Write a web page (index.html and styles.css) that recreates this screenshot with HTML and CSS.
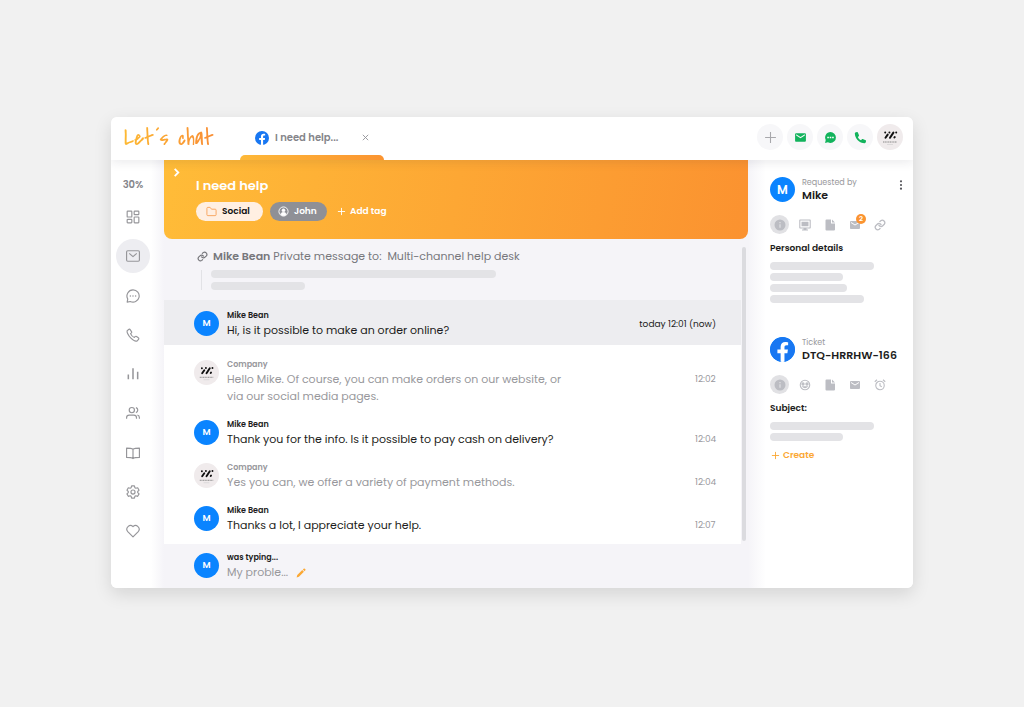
FILE: index.html
```html
<!DOCTYPE html>
<html lang="en">
<head>
  <meta charset="UTF-8">
  <meta name="viewport" content="width=device-width, initial-scale=1.0">
  <title>Let´s chat</title>
  <link rel="stylesheet" href="styles.css">
</head>
<body>

  <!-- shared icons -->
  <svg class="sprite" aria-hidden="true">
    <symbol id="facebook" viewBox="0 0 24 24">
      <circle cx="12" cy="12" r="12" fill="#1877f2"/>
      <path fill="#fff" d="M16.700 15.500l.5-3.500h-3.300V9.800c0-1 .5-1.900 2-1.900h1.500V5s-1.400-.3-2.700-.3c-2.700 0-4.500 1.700-4.500 4.700V12H7.100v3.500h3.100v8.400a12 12 0 0 0 3.700 0v-8.400z"/>
    </symbol>
    <symbol id="company" viewBox="0 0 26 26">
      <g stroke="#111" stroke-width="2" stroke-linecap="round">
        <path d="M8.500 13.800l2.200-3.200M13 13.800l3.400-5.200M17.400 13.500l.3-.4"/>
        <path d="M8.200 8.600h.01M12.400 8.400h.01M19.200 8.400h.01"/>
      </g>
      <path stroke="#888" stroke-width="1" stroke-dasharray="1.200 .5" d="M6 18h14"/>
      <path stroke="#ccc" stroke-width=".6" d="M10 20.500h6"/>
    </symbol>
    <symbol id="mail" viewBox="0 0 24 24">
      <path fill="currentColor" d="M20 4H4a2 2 0 0 0-2 2v12c0 1.100.9 2 2 2h16a2 2 0 0 0 2-2V6a2 2 0 0 0-2-2zm0 4.200l-8 5-8-5V6l8 5 8-5z"/>
    </symbol>
    <symbol id="info" viewBox="0 0 24 24">
      <path fill="currentColor" fill-rule="evenodd" d="M12 1a11 11 0 1 0 0 22 11 11 0 0 0 0-22zm1.200 16.500h-2.400v-7h2.400zm0-9h-2.400V6.200h2.400z"/>
    </symbol>
    <symbol id="file" viewBox="0 0 24 24">
      <path fill="currentColor" d="M5 1h9v8h8v12a2 2 0 0 1-2 2H5a2 2 0 0 1-2-2V3a2 2 0 0 1 2-2zm11 0l6 6h-6z"/>
    </symbol>
    <symbol id="link" viewBox="0 0 24 24">
      <path fill="none" stroke="currentColor" stroke-width="2.600" stroke-linecap="round" stroke-linejoin="round" d="M10 13a5 5 0 0 0 7.500.5l3-3a5 5 0 0 0-7-7l-1.800 1.700M14 11a5 5 0 0 0-7.500-.5l-3 3a5 5 0 0 0 7 7l1.700-1.700"/>
    </symbol>
  </svg>

  <div class="app">

    <header class="topbar">
      <a class="logo" href="#">Let´s chat</a>
      <div class="tab">
        <svg class="tab-icon"><use href="#facebook"/></svg>
        <span class="tab-name">I need help...</span>
        <button class="tab-close" aria-label="Close tab">
          <svg viewBox="0 0 10 10"><path d="M2 2l6 6M8 2l-6 6"/></svg>
        </button>
      </div>
      <div class="actions">
        <button class="action add" aria-label="New">
          <svg viewBox="0 0 24 24"><path fill="none" stroke="currentColor" stroke-width="2" d="M12 2v20M2 12h20"/></svg>
        </button>
        <button class="action" aria-label="Mail"><svg><use href="#mail"/></svg></button>
        <button class="action" aria-label="Chat">
          <svg viewBox="0 0 24 24">
            <path fill="currentColor" d="M12 2a10 10 0 0 1 0 20c-1.700 0-3.300-.4-4.700-1.200L2 22l1.200-5.300A10 10 0 0 1 12 2z"/>
            <path fill="#fff" d="M6 10.500h3v3H6zM10.500 10.500h3v3h-3zM15 10.500h3v3h-3z"/>
          </svg>
        </button>
        <button class="action" aria-label="Call">
          <svg viewBox="0 0 24 24"><path fill="currentColor" d="M7 2.500L9.200 8c.2.600 0 1.200-.4 1.600L7 11c1.200 2.700 3.300 4.800 6 6l1.500-1.800c.4-.5 1-.6 1.600-.4l5.400 2.300c.6.300 1 1 .8 1.600l-.9 2.700c-.2.600-.8 1.100-1.500 1.100C10 22.500 1.500 14 1.500 4.100c0-.7.500-1.300 1.100-1.500l2.800-.9c.7-.2 1.300.2 1.600.8z"/></svg>
        </button>
        <button class="action company" aria-label="Company account"><svg><use href="#company"/></svg></button>
      </div>
    </header>

    <div class="content">

      <aside class="sidebar">
        <span class="percent">30%</span>
        <nav>
          <a href="#" aria-label="Dashboard"><svg viewBox="0 0 24 24"><rect x="2" y="2" width="8" height="10" rx="1"/><rect x="14" y="2" width="8" height="6" rx="1"/><rect x="14" y="12" width="8" height="10" rx="1"/><rect x="2" y="16" width="8" height="6" rx="1"/></svg></a>
          <a href="#" class="active" aria-label="Tickets"><svg viewBox="0 0 24 24"><rect x="1" y="3" width="22" height="18" rx="2"/><path d="M5.500 7.500l6.500 5.500 6.500-5.500"/></svg></a>
          <a href="#" aria-label="Chats"><svg viewBox="0 0 24 24"><path d="M12 1.500a10.500 10.500 0 1 1-4.600 19.900L2 22.500l1-5.300A10.500 10.500 0 0 1 12 1.500z"/><path stroke-width="2.600" stroke-linecap="round" d="M7.500 12h.01M12 12h.01M16.500 12h.01"/></svg></a>
          <a href="#" aria-label="Calls"><svg viewBox="0 0 24 24"><path d="M2.200 4.500l2.300-2c.8-.7 2-.6 2.600.3l2.300 3.300c.5.700.4 1.700-.2 2.300L7.800 9.700c1 2.600 3.900 5.500 6.500 6.500l1.400-1.500c.6-.6 1.600-.7 2.300-.2l3.200 2.300c.9.600 1 1.800.3 2.600l-2 2.300c-2 1.500-7.200-.4-11.500-4.700S.9 6.500 2.200 4.500z"/></svg></a>
          <a href="#" aria-label="Reports"><svg viewBox="0 0 24 24"><path stroke-width="2.600" d="M4 21v-8M12 21V2M20 21V8"/></svg></a>
          <a href="#" aria-label="Customers"><svg viewBox="0 0 24 24"><circle cx="10" cy="7" r="4.500"/><path d="M1 22v-2c0-3 2-4.500 4.500-4.500h8c2.500 0 4.500 1.500 4.500 4.500v2M17 2.700a4.500 4.500 0 0 1 0 8.600M23 22v-2c0-2.500-1-4-3.500-4.500"/></svg></a>
          <a href="#" aria-label="Knowledge base"><svg viewBox="0 0 24 24"><path d="M12 5.500c-2-1.500-6-2-11-2v16c5 0 9 .5 11 2 2-1.500 6-2 11-2v-16c-5 0-9 .5-11 2zM12 5.500v16"/></svg></a>
          <a href="#" aria-label="Settings"><svg viewBox="0 0 24 24"><circle cx="12" cy="12" r="3.500"/><path d="M9.600 1.500h4.800l.8 3.100 1.700 1 3.100-.9 2.400 4.200-2.300 2.200v1.900l2.300 2.200-2.400 4.200-3.100-.9-1.700 1-.8 3.100H9.600l-.8-3.100-1.700-1-3.100.9-2.400-4.200L3.900 13v-1.900L1.600 8.900 4 4.700l3.100.9 1.700-1z"/></svg></a>
          <a href="#" aria-label="Favourites"><svg viewBox="0 0 24 24"><path d="M12 22l-9-9A6.200 6.200 0 0 1 12 4.500 6.200 6.200 0 0 1 21 13z"/></svg></a>
        </nav>
      </aside>

      <main class="ticket">
        <div class="ticket-header">
          <svg class="chevron" viewBox="0 0 10 10"><path d="M3 1l4 4-4 4"/></svg>
          <h1>I need help</h1>
          <div class="tags">
            <span class="tag social">
              <svg viewBox="0 0 24 24"><path d="M2 5a2 2 0 0 1 2-2h5l3 4h8a2 2 0 0 1 2 2v10a2 2 0 0 1-2 2H4a2 2 0 0 1-2-2z"/></svg>
              Social
            </span>
            <span class="tag person">
              <svg viewBox="0 0 24 24"><circle cx="12" cy="12" r="10"/><circle cx="12" cy="9.500" r="3" fill="#fff"/><path fill="#fff" d="M6 18c1-5 11-5 12 0-3 3.500-9 3.500-12 0z"/></svg>
              John
            </span>
            <button class="add-tag">
              <svg viewBox="0 0 10 10"><path d="M5 1v8M1 5h8"/></svg>
              Add tag
            </button>
          </div>
        </div>

        <div class="thread">
          <div class="messages">
            <div class="private">
              <div class="private-title">
                <svg><use href="#link"/></svg>
                <p><b>Mike Bean</b> Private message to: &nbsp;Multi-channel help desk</p>
              </div>
              <div class="quote">
                <div class="bar bar-xl"></div>
                <div class="bar bar-md"></div>
              </div>
            </div>

            <div class="message current">
              <span class="avatar">M</span>
              <div class="text">
                <h2>Mike Bean</h2>
                <p>Hi, is it possible to make an order online?</p>
              </div>
              <time>today 12:01 (now)</time>
            </div>

            <div class="history">
              <div class="message reply">
                <svg class="avatar company"><use href="#company"/></svg>
                <div class="text">
                  <h2>Company</h2>
                  <p>Hello Mike. Of course, you can make orders on our website, or<br>via our social media pages.</p>
                </div>
                <time>12:02</time>
              </div>
              <div class="message">
                <span class="avatar">M</span>
                <div class="text">
                  <h2>Mike Bean</h2>
                  <p>Thank you for the info. Is it possible to pay cash on delivery?</p>
                </div>
                <time>12:04</time>
              </div>
              <div class="message reply">
                <svg class="avatar company"><use href="#company"/></svg>
                <div class="text">
                  <h2>Company</h2>
                  <p>Yes you can, we offer a variety of payment methods.</p>
                </div>
                <time>12:04</time>
              </div>
              <div class="message">
                <span class="avatar">M</span>
                <div class="text">
                  <h2>Mike Bean</h2>
                  <p>Thanks a lot, I appreciate your help.</p>
                </div>
                <time>12:07</time>
              </div>
            </div>
          </div>
          <div class="scrollbar"></div>
        </div>

        <div class="message typing">
          <span class="avatar">M</span>
          <div class="text">
            <h2>was typing...</h2>
            <p>My proble...
              <svg class="pencil" viewBox="0 0 24 24"><path fill="#fba834" d="M1.500 22.500L3 17 15 5l4 4L7 21zM16.500 3.500L18.500 1.500c.7-.7 1.700-.7 2.400 0l1.600 1.600c.7.700.7 1.700 0 2.400l-2 2z"/></svg>
            </p>
          </div>
        </div>
      </main>

      <aside class="details">
        <section>
          <div class="details-head">
            <span class="avatar">M</span>
            <div>
              <small>Requested by</small>
              <h3>Mike</h3>
            </div>
            <button class="more" aria-label="More">
              <svg viewBox="0 0 4 10"><circle cx="2" cy="1.300" r="1.100"/><circle cx="2" cy="5" r="1.100"/><circle cx="2" cy="8.700" r="1.100"/></svg>
            </button>
          </div>
          <div class="details-tabs">
            <button class="selected" aria-label="Info"><svg><use href="#info"/></svg></button>
            <button aria-label="Device"><svg viewBox="0 0 24 24"><path fill="currentColor" fill-rule="evenodd" d="M2 1h20a1.500 1.500 0 0 1 1.500 1.500v15A1.500 1.500 0 0 1 22 19h-7v2h3v2H6v-2h3v-2H2a1.500 1.500 0 0 1-1.500-1.500v-15A1.500 1.500 0 0 1 2 1zm.7 2.200v13.600h18.600V3.200zM5 5.500h14v9H5z"/></svg></button>
            <button aria-label="Files"><svg><use href="#file"/></svg></button>
            <button aria-label="Mails"><svg><use href="#mail"/></svg><span class="badge">2</span></button>
            <button aria-label="Links"><svg><use href="#link"/></svg></button>
          </div>
          <h4>Personal details</h4>
          <div class="bars">
            <div class="bar bar-lg"></div>
            <div class="bar bar-xs"></div>
            <div class="bar bar-sm"></div>
            <div class="bar bar-md"></div>
          </div>
        </section>

        <section>
          <div class="details-head">
            <svg class="avatar"><use href="#facebook"/></svg>
            <div>
              <small>Ticket</small>
              <h3>DTQ-HRRHW-166</h3>
            </div>
          </div>
          <div class="details-tabs">
            <button class="selected" aria-label="Info"><svg><use href="#info"/></svg></button>
            <button aria-label="Mood"><svg viewBox="0 0 24 24" fill="none" stroke="currentColor" stroke-width="2.200"><circle cx="12" cy="12" r="9.500"/><circle cx="8" cy="10" r="2.200" fill="currentColor"/><circle cx="16" cy="10" r="2.200" fill="currentColor"/><path d="M7.500 15.500c2 2.500 7 2.500 9 0z"/></svg></button>
            <button aria-label="Files"><svg><use href="#file"/></svg></button>
            <button aria-label="Mails"><svg><use href="#mail"/></svg></button>
            <button aria-label="Reminder"><svg viewBox="0 0 24 24" fill="none" stroke="currentColor" stroke-width="2.200"><circle cx="12" cy="13" r="8.500"/><path d="M12 8v5.500l3.500 2M1.500 5.500l4.500-4M22.500 5.500l-4.500-4"/></svg></button>
          </div>
          <h4>Subject:</h4>
          <div class="bars">
            <div class="bar bar-lg"></div>
            <div class="bar bar-xs"></div>
          </div>
          <button class="create">
            <svg viewBox="0 0 10 10"><path d="M5 1v8M1 5h8"/></svg>
            Create
          </button>
        </section>
      </aside>

    </div>
  </div>

</body>
</html>
```

FILE: styles.css
```css
* {
  box-sizing: border-box;
}

body {
  margin: 0;
  padding-bottom: 2px;
  min-height: 100vh;
  display: grid;
  place-items: center;
  background: #f1f1f1;
  color: #1c1c20;
  font-family: Poppins, Inter, sans-serif;
  font-size: 11px;
}

h1, h2, h3, h4, p {
  margin: 0;
}

button {
  padding: 0;
  border: none;
  background: none;
  font: inherit;
  cursor: pointer;
}

svg {
  display: block;
  flex-shrink: 0;
}

.sprite {
  position: absolute;
  width: 0;
  height: 0;
}

.app {
  width: 100%;
  max-width: 802px;
  background: #fff;
  border-radius: 6px;
  box-shadow: 0 6px 18px rgba(0, 0, 0, 0.12);
  overflow: hidden;
}

/* Top bar */

.topbar {
  position: relative;
  z-index: 1;
  display: flex;
  align-items: stretch;
  height: 43px;
  padding: 0 10px 0 13px;
  background: #fff;
  box-shadow: 0 2px 10px rgba(40, 40, 60, 0.1);
}

.logo {
  width: 116px;
  background: linear-gradient(90deg, #fdb933, #f98f35 88px);
  background-clip: text;
  color: transparent;
  font-family: "Covered By Your Grace", "Reenie Beanie", "Liberation Sans", cursive;
  font-size: 23px;
  line-height: 43px;
  text-decoration: none;
  white-space: nowrap;
}

.tab {
  display: flex;
  align-items: center;
  width: 144px;
  padding: 0 14px 2px 15px;
}

.tab::after {
  content: "";
  position: absolute;
  bottom: 0;
  width: 144px;
  height: 5px;
  margin-left: -15px;
  border-radius: 6px 6px 0 0;
  background: linear-gradient(90deg, #feb938, #fb9431);
}

.tab-icon {
  width: 14px;
  height: 14px;
}

.tab-name {
  margin-left: 6px;
  color: #85858a;
  font-size: 10px;
  font-weight: 600;
}

.tab-close {
  margin-left: auto;
}

.tab-close svg {
  width: 9px;
  height: 9px;
  stroke: #929297;
}

.actions {
  display: flex;
  gap: 4px;
  margin-left: auto;
  padding-top: 7px;
}

.action {
  display: grid;
  place-items: center;
  width: 26px;
  height: 26px;
  border-radius: 50%;
  background: #f7f7f9;
  color: #12b35c;
}

.action svg {
  width: 13px;
  height: 13px;
}

.action.add {
  color: #a8a8ac;
}

.action.company {
  background: #f0ebec;
}

.action.company svg {
  width: 26px;
  height: 26px;
}

/* Sidebar */

.content {
  display: grid;
  grid-template-columns: 53px 1fr 165px;
}

.sidebar {
  display: flex;
  flex-direction: column;
  padding: 17px 9px 40px 0;
  background: linear-gradient(90deg, #fff 40px, #f5f4f8);
}

.percent {
  margin-bottom: 7px;
  color: #85858a;
  font-size: 10px;
  font-weight: 600;
  line-height: 16px;
  text-align: center;
}

.sidebar nav {
  flex: 1;
  display: flex;
  flex-direction: column;
  justify-content: space-between;
  align-items: center;
}

.sidebar a {
  display: grid;
  place-items: center;
  width: 34px;
  height: 34px;
  border-radius: 50%;
}

.sidebar a.active {
  background: #ededf1;
}

.sidebar a svg {
  width: 14px;
  height: 14px;
  fill: none;
  stroke: #96969a;
  stroke-width: 2;
  stroke-linejoin: round;
}

/* Ticket */

.ticket {
  background: #f5f4f8;
}

.ticket-header {
  position: relative;
  height: 79px;
  padding: 16px 32px;
  border-radius: 0 0 8px 8px;
  background: linear-gradient(100deg, #ffbc38, #fb9230);
  color: #fff;
}

.chevron {
  position: absolute;
  top: 8px;
  left: 8px;
  width: 9px;
  height: 9px;
  fill: none;
  stroke: #fff;
  stroke-width: 2;
}

.ticket-header h1 {
  font-size: 13px;
  font-weight: 600;
  line-height: 20px;
}

.tags {
  display: flex;
  align-items: center;
  gap: 7px;
  margin-top: 6px;
}

.tag {
  display: flex;
  align-items: center;
  gap: 5px;
  height: 19px;
  padding: 0 10px;
  border-radius: 10px;
  font-size: 9px;
  font-weight: 600;
}

.tag svg {
  width: 11px;
  height: 11px;
  fill: none;
  stroke: #f7a25a;
  stroke-width: 2;
}

.tag.social {
  width: 67px;
  background: #ffefe2;
  color: #111;
}

.tag.person {
  width: 57px;
  padding: 0 8px;
  background: #8f9096;
}

.tag.person svg {
  stroke: #fff;
}

.add-tag {
  display: flex;
  align-items: center;
  gap: 4px;
  margin-left: 3px;
  color: #fff;
  font-size: 9px;
  font-weight: 600;
}

.add-tag svg,
.create svg {
  width: 9px;
  height: 9px;
  stroke: currentColor;
}

.thread {
  display: flex;
}

.messages {
  flex: 1;
}

.scrollbar {
  width: 4px;
  margin: 8px 2px 3px 1px;
  border-radius: 2px;
  background: #dbdbdf;
}

.private {
  height: 61px;
  padding: 9px 33px 0;
}

.private-title {
  display: flex;
  align-items: center;
  gap: 5px;
  color: #77777c;
  line-height: 17px;
}

.private-title b {
  font-weight: 600;
}

.private-title svg {
  width: 11px;
  height: 11px;
}

.quote {
  display: grid;
  gap: 4px;
  margin: 5px 4px 0;
  padding-left: 9px;
  border-left: 1px solid #e2e2e6;
}

.bar {
  height: 8px;
  border-radius: 4px;
  background: #e3e3e6;
}

.bar-xl { width: 285px; }
.bar-lg { width: 104px; }
.bar-md { width: 94px; }
.bar-sm { width: 77px; }
.bar-xs { width: 73px; }

.message {
  display: flex;
  gap: 8px;
  padding: 0 25px 0 30px;
}

.message.current {
  padding-top: 10px;
  padding-bottom: 6px;
  background: #ededf0;
}

.message.typing {
  padding-top: 8px;
  padding-bottom: 7px;
}

.history {
  display: grid;
  gap: 14px;
  padding: 14px 0 10px;
  background: #fff;
}

.avatar {
  display: grid;
  place-items: center;
  flex-shrink: 0;
  width: 25px;
  height: 25px;
  border-radius: 50%;
  background: #0a84ff;
  color: #fff;
  font-size: 9px;
  font-weight: 600;
}

.message .avatar {
  margin-top: 1px;
}

.avatar.company {
  background: #f0ebec;
}

.text {
  flex: 1;
}

.message h2 {
  font-size: 8px;
  font-weight: 600;
  line-height: 12px;
}

.message p {
  display: flex;
  align-items: center;
  gap: 8px;
  line-height: 17px;
}

.message.reply p {
  display: block;
}

.reply h2,
.reply p,
.typing p {
  color: #98989c;
}

.message time {
  width: 21px;
  margin-top: 12px;
  color: #98989c;
  font-size: 9px;
  line-height: 17px;
  white-space: nowrap;
}

.message.current time {
  width: auto;
  margin-top: 6px;
  color: #1c1c20;
}

.pencil {
  width: 10px;
  height: 10px;
}

/* Details */

.details {
  display: grid;
  align-content: start;
  gap: 34px;
  padding: 17px 8px 0 22px;
  background: linear-gradient(90deg, #f5f4f8, #fff 18px);
}

.details-head {
  display: flex;
  align-items: center;
  gap: 7px;
}

.details-head .avatar {
  font-size: 12px;
}

.details-head small {
  display: block;
  color: #98989c;
  font-size: 8px;
  line-height: 11px;
}

.details-head h3 {
  font-size: 11px;
  font-weight: 600;
  line-height: 14px;
  white-space: nowrap;
}

.more {
  align-self: flex-start;
  margin: 3px 2px 0 auto;
}

.more svg {
  width: 4px;
  height: 10px;
  fill: #55555a;
}

.details-tabs {
  display: flex;
  gap: 6px;
  margin: 13px 0 8px;
}

.details-tabs button {
  position: relative;
  display: grid;
  place-items: center;
  width: 19px;
  height: 19px;
  border-radius: 50%;
  color: #bcbdc3;
}

.details-tabs button.selected {
  background: #e1e1e4;
}

.details-tabs svg {
  width: 12px;
  height: 12px;
}

.badge {
  position: absolute;
  top: -1px;
  right: -2px;
  width: 10px;
  height: 10px;
  border-radius: 50%;
  background: #fb9431;
  color: #fff;
  font-size: 7px;
  font-weight: 600;
  line-height: 10px;
}

.details h4 {
  font-size: 9px;
  font-weight: 600;
  line-height: 12px;
}

.bars {
  display: grid;
  gap: 3px;
  margin-top: 8px;
}

.create {
  display: flex;
  align-items: center;
  gap: 3px;
  margin: 8px 0 0 1px;
  color: #fba834;
  font-size: 9px;
  font-weight: 600;
  line-height: 12px;
}
```
